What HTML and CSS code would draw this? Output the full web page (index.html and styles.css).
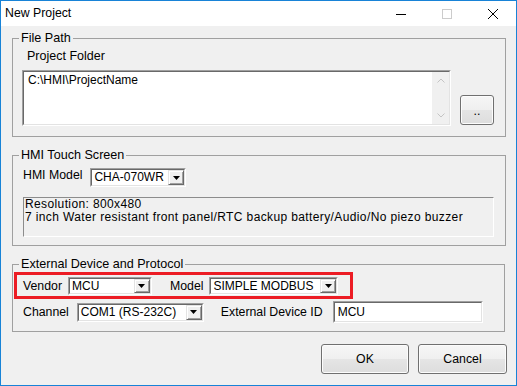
FILE: index.html
```
<!DOCTYPE HTML>
<html lang="en">

<head>
  <meta name="viewport" content="width=device-width, initial-scale=1" charset="utf-8">
  <title>New Project</title>
  <link rel="stylesheet" href="styles.css">
</head>

<body>
  <div class="window">
    <div class="titlebar">
      <span class="title">New Project</span>
      <span class="caption-btn">
        <svg width="10" height="10" viewBox="0 0 10 10"><path d="M0 5.5h10" stroke="#000" /></svg>
      </span>
      <span class="caption-btn">
        <svg width="10" height="10" viewBox="0 0 10 10"><rect x="0.5" y="0.5" width="9" height="9" fill="none" stroke="#cccccc" /></svg>
      </span>
      <span class="caption-btn">
        <svg width="10" height="10" viewBox="0 0 10 10"><path d="M0 0L10 10M10 0L0 10" stroke="#000" /></svg>
      </span>
    </div>

    <div class="dialog">
      <fieldset class="group">
        <legend>File Path</legend>
        <div class="field-label">Project Folder</div>
        <div class="path-row">
          <div class="sunken path-box">
            <div class="well path-well">
              <div class="path-text">C:\HMI\ProjectName</div>
              <div class="scrollbar">
                <span class="scroll-arrow">
                  <svg width="8" height="5" viewBox="0 0 8 5"><path d="M0.5 4.5L4 1L7.5 4.5" fill="none" stroke="#c4c4c4" /></svg>
                </span>
                <span class="scroll-arrow">
                  <svg width="8" height="5" viewBox="0 0 8 5"><path d="M0.5 0.5L4 4L7.5 0.5" fill="none" stroke="#c4c4c4" /></svg>
                </span>
              </div>
            </div>
          </div>
          <button type="button" class="btn btn-browse">..</button>
        </div>
      </fieldset>

      <fieldset class="group">
        <legend>HMI Touch Screen</legend>
        <div class="model-row">
          <span class="label">HMI Model</span>
          <div class="sunken combo combo-hmi">
            <div class="well combo-well">
              <span class="combo-text">CHA-070WR</span>
              <span class="combo-arrow">
                <svg width="7" height="4" viewBox="0 0 7 4"><path d="M0 0h7L3.5 4z" /></svg>
              </span>
            </div>
          </div>
        </div>
        <div class="info-box">
          Resolution: 800x480<br>
          7 inch Water resistant front panel/RTC backup battery/Audio/No piezo buzzer
        </div>
      </fieldset>

      <fieldset class="group group-device">
        <legend>External Device and Protocol</legend>
        <div class="highlight-row">
          <span class="label">Vendor</span>
          <div class="sunken combo combo-vendor">
            <div class="well combo-well">
              <span class="combo-text">MCU</span>
              <span class="combo-arrow">
                <svg width="7" height="4" viewBox="0 0 7 4"><path d="M0 0h7L3.5 4z" /></svg>
              </span>
            </div>
          </div>
          <span class="label label-model">Model</span>
          <div class="sunken combo combo-model">
            <div class="well combo-well">
              <span class="combo-text">SIMPLE MODBUS</span>
              <span class="combo-arrow">
                <svg width="7" height="4" viewBox="0 0 7 4"><path d="M0 0h7L3.5 4z" /></svg>
              </span>
            </div>
          </div>
        </div>
        <div class="channel-row">
          <span class="label">Channel</span>
          <div class="sunken combo combo-channel">
            <div class="well combo-well">
              <span class="combo-text">COM1 (RS-232C)</span>
              <span class="combo-arrow">
                <svg width="7" height="4" viewBox="0 0 7 4"><path d="M0 0h7L3.5 4z" /></svg>
              </span>
            </div>
          </div>
          <span class="label label-id">External Device ID</span>
          <div class="sunken id-box">
            <div class="well id-well">MCU</div>
          </div>
        </div>
      </fieldset>

      <div class="button-row">
        <button type="button" class="btn btn-ok">OK</button>
        <button type="button" class="btn btn-cancel">Cancel</button>
      </div>
    </div>
  </div>
</body>

</html>
```

FILE: styles.css
```
body {
  margin: 0;
  padding: 0;
  background-color: #fff;
  font-family: "Liberation Sans", Arial, sans-serif;
  font-size: 12px;
  color: #000;
}

.window {
  width: 517px;
  height: 386px;
  box-sizing: border-box;
  border: 1px solid #1883d7;
  background-color: #f0f0f0;
  display: flex;
  flex-direction: column;
}

/* title bar */
.titlebar {
  height: 25px;
  flex-shrink: 0;
  background-color: #fff;
  display: flex;
}

.title {
  flex: 1;
  padding-left: 4px;
  line-height: 25px;
  font-size: 12.3px;
}

.caption-btn {
  width: 46px;
  display: flex;
  align-items: center;
  justify-content: center;
}

.caption-btn svg {
  display: block;
}

/* dialog body */
.dialog {
  flex: 1;
  padding: 5px 9px 0 11px;
  display: flex;
  flex-direction: column;
}

.group {
  width: 494px;
  box-sizing: border-box;
  margin: 0;
  padding: 0;
  min-width: 0;
  border: 1px solid #a0a0a0;
}

.group + .group {
  margin-top: 11px;
}

.group-device {
  width: 493px;
}

.group legend {
  margin-left: 6px;
  padding: 0 2px;
  font-size: 12.6px;
  line-height: 14px;
}

.field-label {
  margin: 4px 0 0 14px;
  font-size: 12.5px;
  line-height: 14px;
}

.label {
  font-size: 12.3px;
  line-height: 14px;
  white-space: nowrap;
}

/* sunken 3d borders */
.sunken {
  box-sizing: border-box;
  border: 1px solid;
  border-color: #a0a0a0 #fff #fff #a0a0a0;
}

.well {
  height: 100%;
  box-sizing: border-box;
  border: 1px solid;
  border-color: #696969 #e3e3e3 #e3e3e3 #696969;
  background-color: #fff;
}

/* project folder */
.path-row {
  display: flex;
  align-items: flex-end;
  gap: 9px;
  margin: 7px 0 10px 9px;
}

.path-box {
  width: 429px;
  height: 56px;
}

.path-well {
  display: flex;
}

.path-text {
  flex: 1;
  padding: 1px 0 0 4px;
  line-height: 14px;
}

.scrollbar {
  width: 17px;
  background-color: #f0f0f0;
  display: flex;
  flex-direction: column;
  justify-content: space-between;
}

.scroll-arrow {
  height: 17px;
  display: flex;
  align-items: center;
  justify-content: center;
}

.scroll-arrow svg {
  display: block;
}

/* buttons */
.btn {
  font-family: inherit;
  font-size: 12.3px;
  color: #000;
  height: 30px;
  padding: 0;
  border: 1px solid #707070;
  border-radius: 3px;
  background: linear-gradient(#f6f6f6, #efefef 50%, #e5e5e5 50%, #dddddd);
  box-shadow: inset 0 0 0 1px #fcfcfc;
}

.btn-browse {
  width: 34px;
  margin-bottom: 1px;
  padding-top: 1px;
}

.button-row {
  display: flex;
  justify-content: flex-end;
  gap: 9px;
  margin-top: 12px;
}

.btn-ok {
  width: 88px;
}

.btn-cancel {
  width: 89px;
}

/* combo boxes */
.combo {
  height: 19px;
}

.combo-well {
  display: flex;
  align-items: stretch;
}

.combo-text {
  flex: 1;
  padding-left: 2px;
  line-height: 15px;
  white-space: nowrap;
  overflow: hidden;
}

.combo-arrow {
  width: 16px;
  box-sizing: border-box;
  border: 1px solid;
  border-color: #e3e3e3 #696969 #696969 #e3e3e3;
  box-shadow: inset 1px 1px #fff, inset -1px -1px #a0a0a0;
  background-color: #f0f0f0;
  display: flex;
  align-items: center;
  justify-content: center;
}

.combo-arrow svg {
  display: block;
}

.combo-hmi {
  width: 96px;
}

.combo-vendor {
  width: 84px;
  height: 18px;
}

.combo-model {
  width: 129px;
  height: 18px;
}

.combo-channel {
  width: 127px;
}

/* hmi screen */
.model-row {
  display: flex;
  align-items: flex-start;
  gap: 8px;
  margin: 6px 0 0 10px;
}

.info-box {
  width: 471px;
  height: 40px;
  box-sizing: border-box;
  margin: 10px 0 8px 10px;
  padding: 0 0 0 1px;
  border: 1px solid;
  border-color: #8c8c8c #fff #fff #8c8c8c;
  line-height: 13px;
  letter-spacing: 0.38px;
}

/* external device */
.highlight-row {
  width: 339px;
  height: 27px;
  box-sizing: border-box;
  margin: 1px 0 0 1px;
  padding-left: 6px;
  border: 3px solid #ec1c24;
  display: flex;
  align-items: center;
  gap: 6px;
}

.label-model {
  margin-left: 12px;
}

.channel-row {
  height: 22px;
  display: flex;
  align-items: center;
  gap: 8px;
  margin: 2px 0 8px 10px;
}

.label-id {
  margin-left: 9px;
}

.id-box {
  width: 150px;
  height: 22px;
  margin-left: 2px;
}

.id-well {
  padding-left: 3px;
  line-height: 18px;
}
```
